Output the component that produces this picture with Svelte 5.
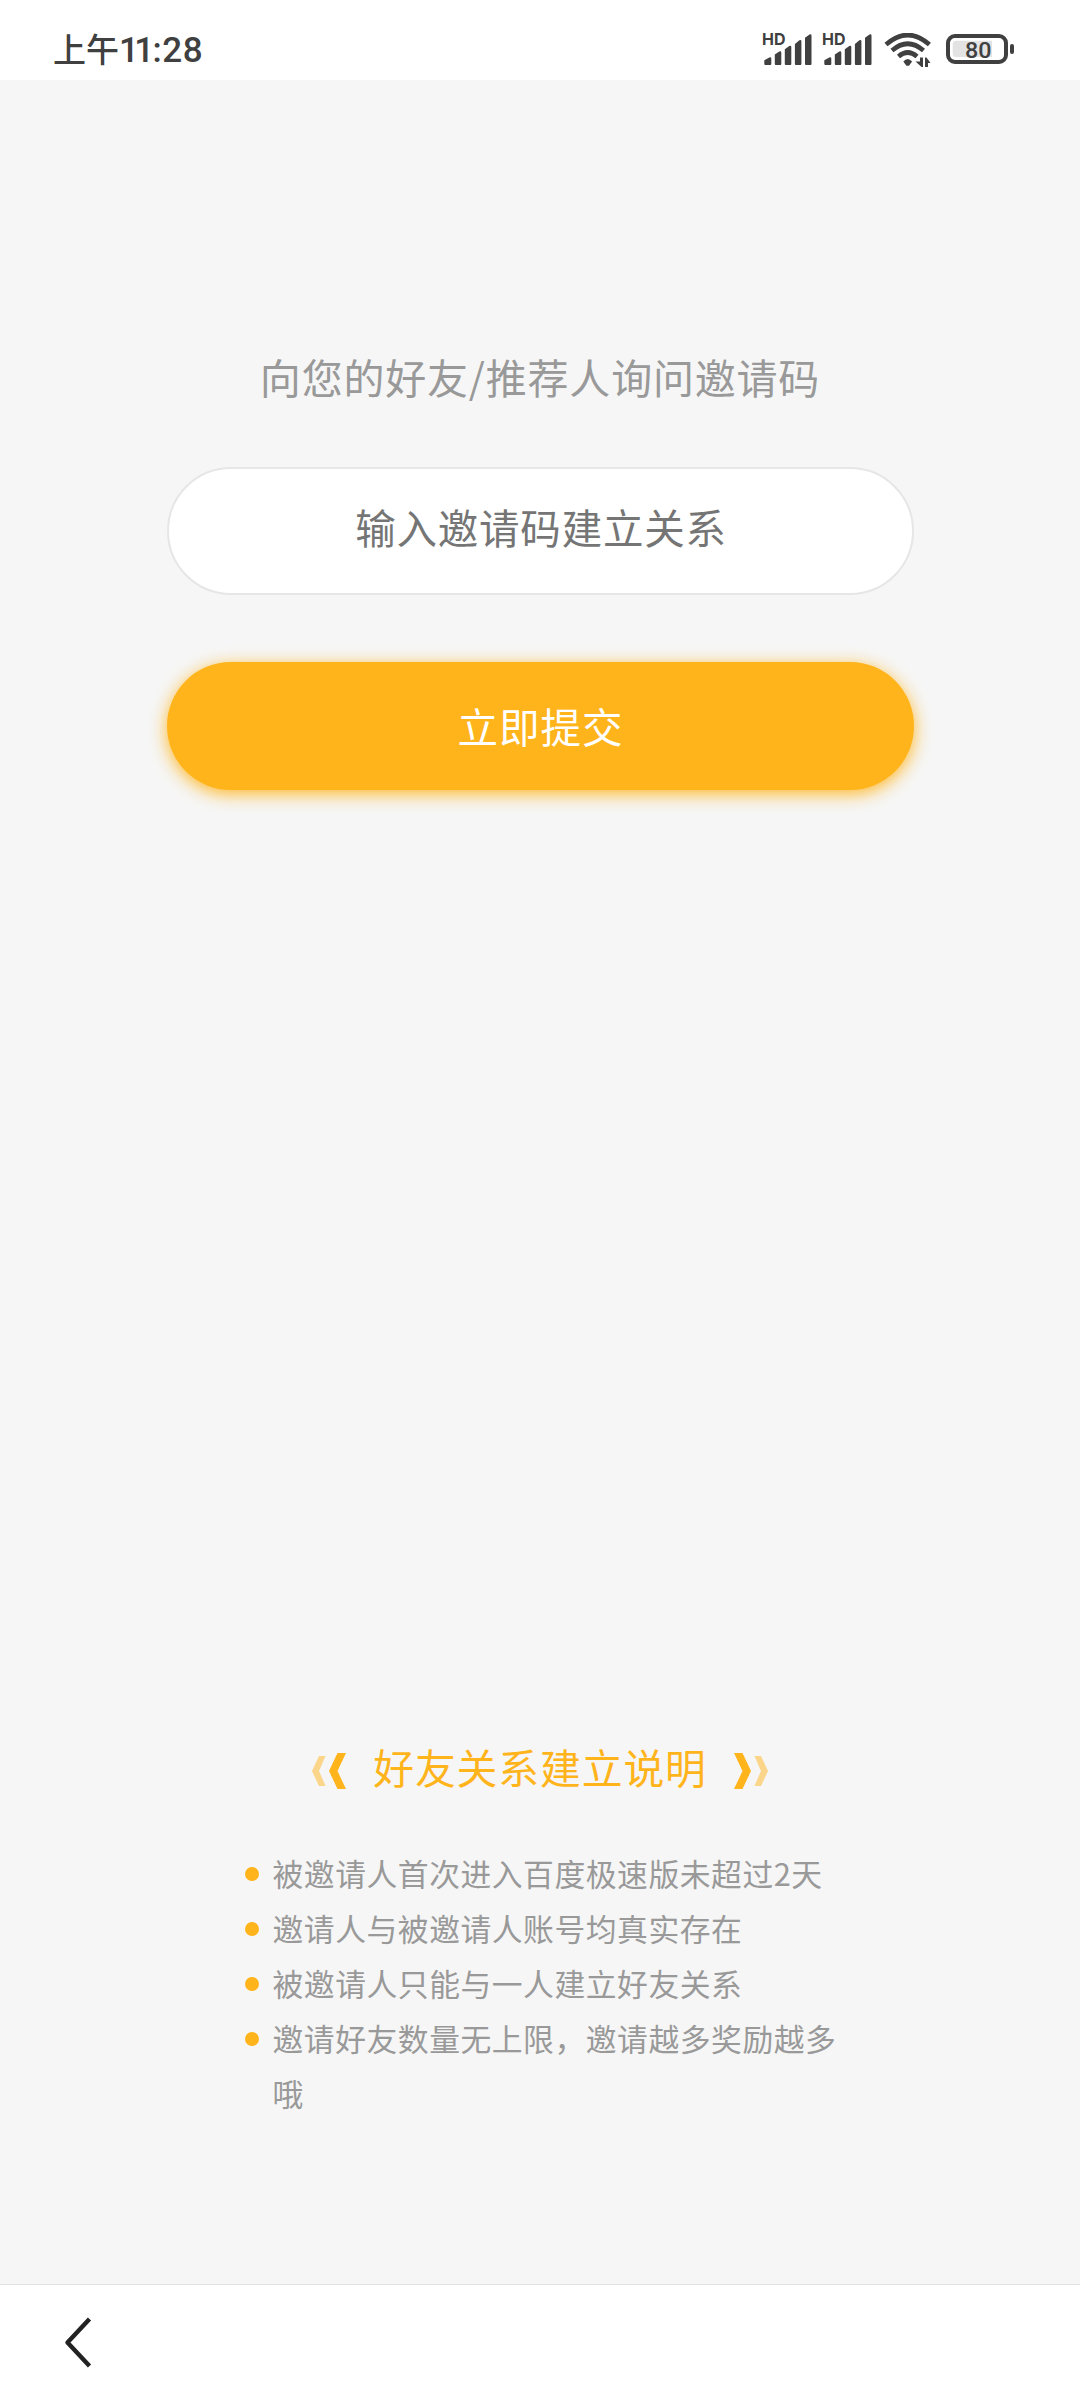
<script lang="ts">
	const rules: string[] = [
		'被邀请人首次进入百度极速版未超过2天',
		'邀请人与被邀请人账号均真实存在',
		'被邀请人只能与一人建立好友关系',
		'邀请好友数量无上限，邀请越多奖励越多哦'
	];

	let code = $state('');
</script>

{#snippet signal()}
	<svg class="signal" width="50" height="42" viewBox="0 -8 50 42">
		<text x="0" y="12" textLength="23.5" lengthAdjust="spacingAndGlyphs">HD</text>
		<path
			d="M2.3 31v-3.8l5-2.8q2-.6 2 1V31q0 1-1 1h-5q-1 0-1-1z
			M12.8 31v-9.5l4.500-3q2-.6 2 1V31q0 1-1 1h-4.500q-1 0-1-1z
			M22.8 31V16.2l4.500-3.300q2-.6 2 1V31q0 1-1 1h-4.500q-1 0-1-1z
			M32.9 31V11l4.500-3.800q2-.6 2 1V31q0 1-1 1h-4.500q-1 0-1-1z
			M43 31V4.800l4.500-3.300q2-.6 2 1V31q0 1-1 1H44q-1 0-1-1z"
		/>
	</svg>
{/snippet}

{#snippet arrows(flipped: boolean)}
	<svg class="arrows" class:flipped width="36" height="38" viewBox="0 0 36 38">
		<path class="faint" d="M8 4h6.500L8 19l6.500 15H8L1 19z" />
		<path d="M26.500 1H35l-8.500 18L35 37h-8.500L18 19z" />
	</svg>
{/snippet}

<div class="screen">
	<header class="status-bar">
		<div class="time">
			<span class="period">上午</span>
			<span class="hour">11</span>
			<span class="colon">:</span>
			<span class="minute">28</span>
		</div>
		<div class="indicators">
			{@render signal()}
			{@render signal()}
			<svg class="wifi" width="50" height="38" viewBox="0 0 50 38">
				<g fill="none" stroke="#404040" stroke-width="4.600">
					<path d="M2 11.500Q23.700-7.500 45.400 11.500" />
					<path d="M8 17.500Q23.700 4 39.500 17.500" />
					<path d="M14.500 23.500Q23.700 15.500 33 23.500" />
				</g>
				<path d="M19.300 28.500q4.400-5 8.800 0L25 32.700h-2.600z" />
				<path d="M36 24.500h3V34h-1.500L31.500 28.500H36zM41 34h3v-4h2.500L42.500 24.500H41z" />
			</svg>
			<svg class="battery" width="70" height="32" viewBox="0 0 70 32">
				<rect x="3" y="3" width="58" height="26" rx="7" fill="none" stroke="#404040" stroke-width="4" />
				<path class="level" d="M11 7.700h36V24H11q-3.300 0-3.300-3v-10.300q0-3 3.300-3z" />
				<rect x="65" y="11" width="4" height="10" rx="2" />
				<text x="20" y="24.500" textLength="26.500" lengthAdjust="spacingAndGlyphs">80</text>
			</svg>
		</div>
	</header>

	<main class="content">
		<p class="hint">向您的好友/推荐人询问邀请码</p>
		<input class="code-input" type="text" placeholder="输入邀请码建立关系" bind:value={code} />
		<button class="submit">立即提交</button>

		<section class="notes">
			<h2 class="notes-title">
				{@render arrows(false)}
				<span>好友关系建立说明</span>
				{@render arrows(true)}
			</h2>
			<ul class="rules">
				{#each rules as rule}
					<li>{rule}</li>
				{/each}
			</ul>
		</section>
	</main>

	<footer class="toolbar">
		<button class="back" aria-label="返回">
			<svg width="30" height="54" viewBox="0 0 30 54">
				<path d="M25.500 3L3.500 26.500L25.500 50" />
			</svg>
		</button>
	</footer>
</div>

<style>
	:global(body) {
		margin: 0;
	}

	.screen {
		display: flex;
		flex-direction: column;
		width: 1080px;
		height: 2400px;
		background: #f6f6f6;
		font-family: 'Noto Sans CJK SC', sans-serif;
	}

	.status-bar {
		display: flex;
		justify-content: space-between;
		box-sizing: border-box;
		height: 80px;
		padding: 0 65px 0 53px;
		background: #fff;
		color: #404040;
	}

	.time {
		display: flex;
		align-items: baseline;
		height: 80px;
		font: 500 35px/97px Roboto, sans-serif;
		white-space: nowrap;
	}

	.period {
		font-family: 'Noto Sans CJK SC', sans-serif;
		font-size: 33px;
	}

	.hour {
		margin-left: 0;
		letter-spacing: -4.7px;
	}

	.colon {
		margin: 0 0.5px 0 3px;
	}

	.minute {
		letter-spacing: 0.8px;
	}

	.indicators {
		display: flex;
		align-items: flex-start;
		padding-top: 25px;
		fill: #404040;
	}

	.signal {
		margin-right: 10px;
	}

	.signal text {
		font: 700 16.5px Inter, sans-serif;
	}

	.wifi {
		margin: 8px 0 0 2px;
	}

	.battery {
		margin: 8px 0 0 11px;
	}

	.battery .level {
		fill: #e3e3e3;
	}

	.battery text {
		font: 500 22px Roboto, sans-serif;
	}

	.content {
		display: flex;
		flex: 1;
		flex-direction: column;
		align-items: center;
	}

	.hint {
		margin: 266px 0 0;
		font-size: 41px;
		line-height: 60px;
		letter-spacing: 0.8px;
		color: #999;
	}

	.code-input {
		box-sizing: border-box;
		width: 747px;
		height: 128px;
		margin-top: 61px;
		padding: 0 40px 10px 42px;
		border: 2px solid #e6e6e6;
		border-radius: 64px;
		outline: none;
		background: #fff;
		font: inherit;
		font-size: 40.5px;
		letter-spacing: 0.8px;
		text-align: center;
	}

	.code-input::placeholder {
		color: #757575;
		opacity: 1;
	}

	.submit {
		width: 747px;
		height: 128px;
		margin-top: 67px;
		padding: 0 0 1px 1px;
		border: none;
		border-radius: 64px;
		background: #ffb41c;
		box-shadow: 0 4px 17px rgba(255, 180, 28, 0.95);
		font: inherit;
		font-size: 40.5px;
		letter-spacing: 1px;
		color: #fff;
	}

	.notes {
		display: flex;
		flex-direction: column;
		align-items: center;
		width: 594px;
		margin-top: 947px;
	}

	.notes-title {
		display: flex;
		align-items: center;
		gap: 26px;
		margin: 0;
		font-size: 40.8px;
		font-weight: 400;
		line-height: 60px;
		letter-spacing: 0.9px;
		color: #ffb41c;
	}

	.arrows {
		margin-top: 7px;
		fill: #ffb41c;
	}

	.arrows .faint {
		opacity: 0.5;
	}

	.flipped {
		transform: scaleX(-1);
	}

	.rules {
		width: 566px;
		margin: 48px 0 0 31px;
		padding: 0;
		list-style: none;
		font-size: 30.8px;
		line-height: 55px;
		letter-spacing: 0.53px;
		color: #999;
	}

	.rules li {
		position: relative;
	}

	.rules li::before {
		content: '';
		position: absolute;
		top: 22px;
		left: -28px;
		width: 14px;
		height: 14px;
		border-radius: 50%;
		background: #ffb41c;
	}

	.toolbar {
		display: flex;
		align-items: center;
		box-sizing: border-box;
		height: 116px;
		padding-left: 64px;
		border-top: 1px solid #e2e2e2;
		background: #fff;
	}

	.back {
		display: flex;
		padding: 0;
		border: none;
		background: none;
	}

	.back path {
		fill: none;
		stroke: #222;
		stroke-width: 4.4;
		stroke-linejoin: round;
	}
</style>
